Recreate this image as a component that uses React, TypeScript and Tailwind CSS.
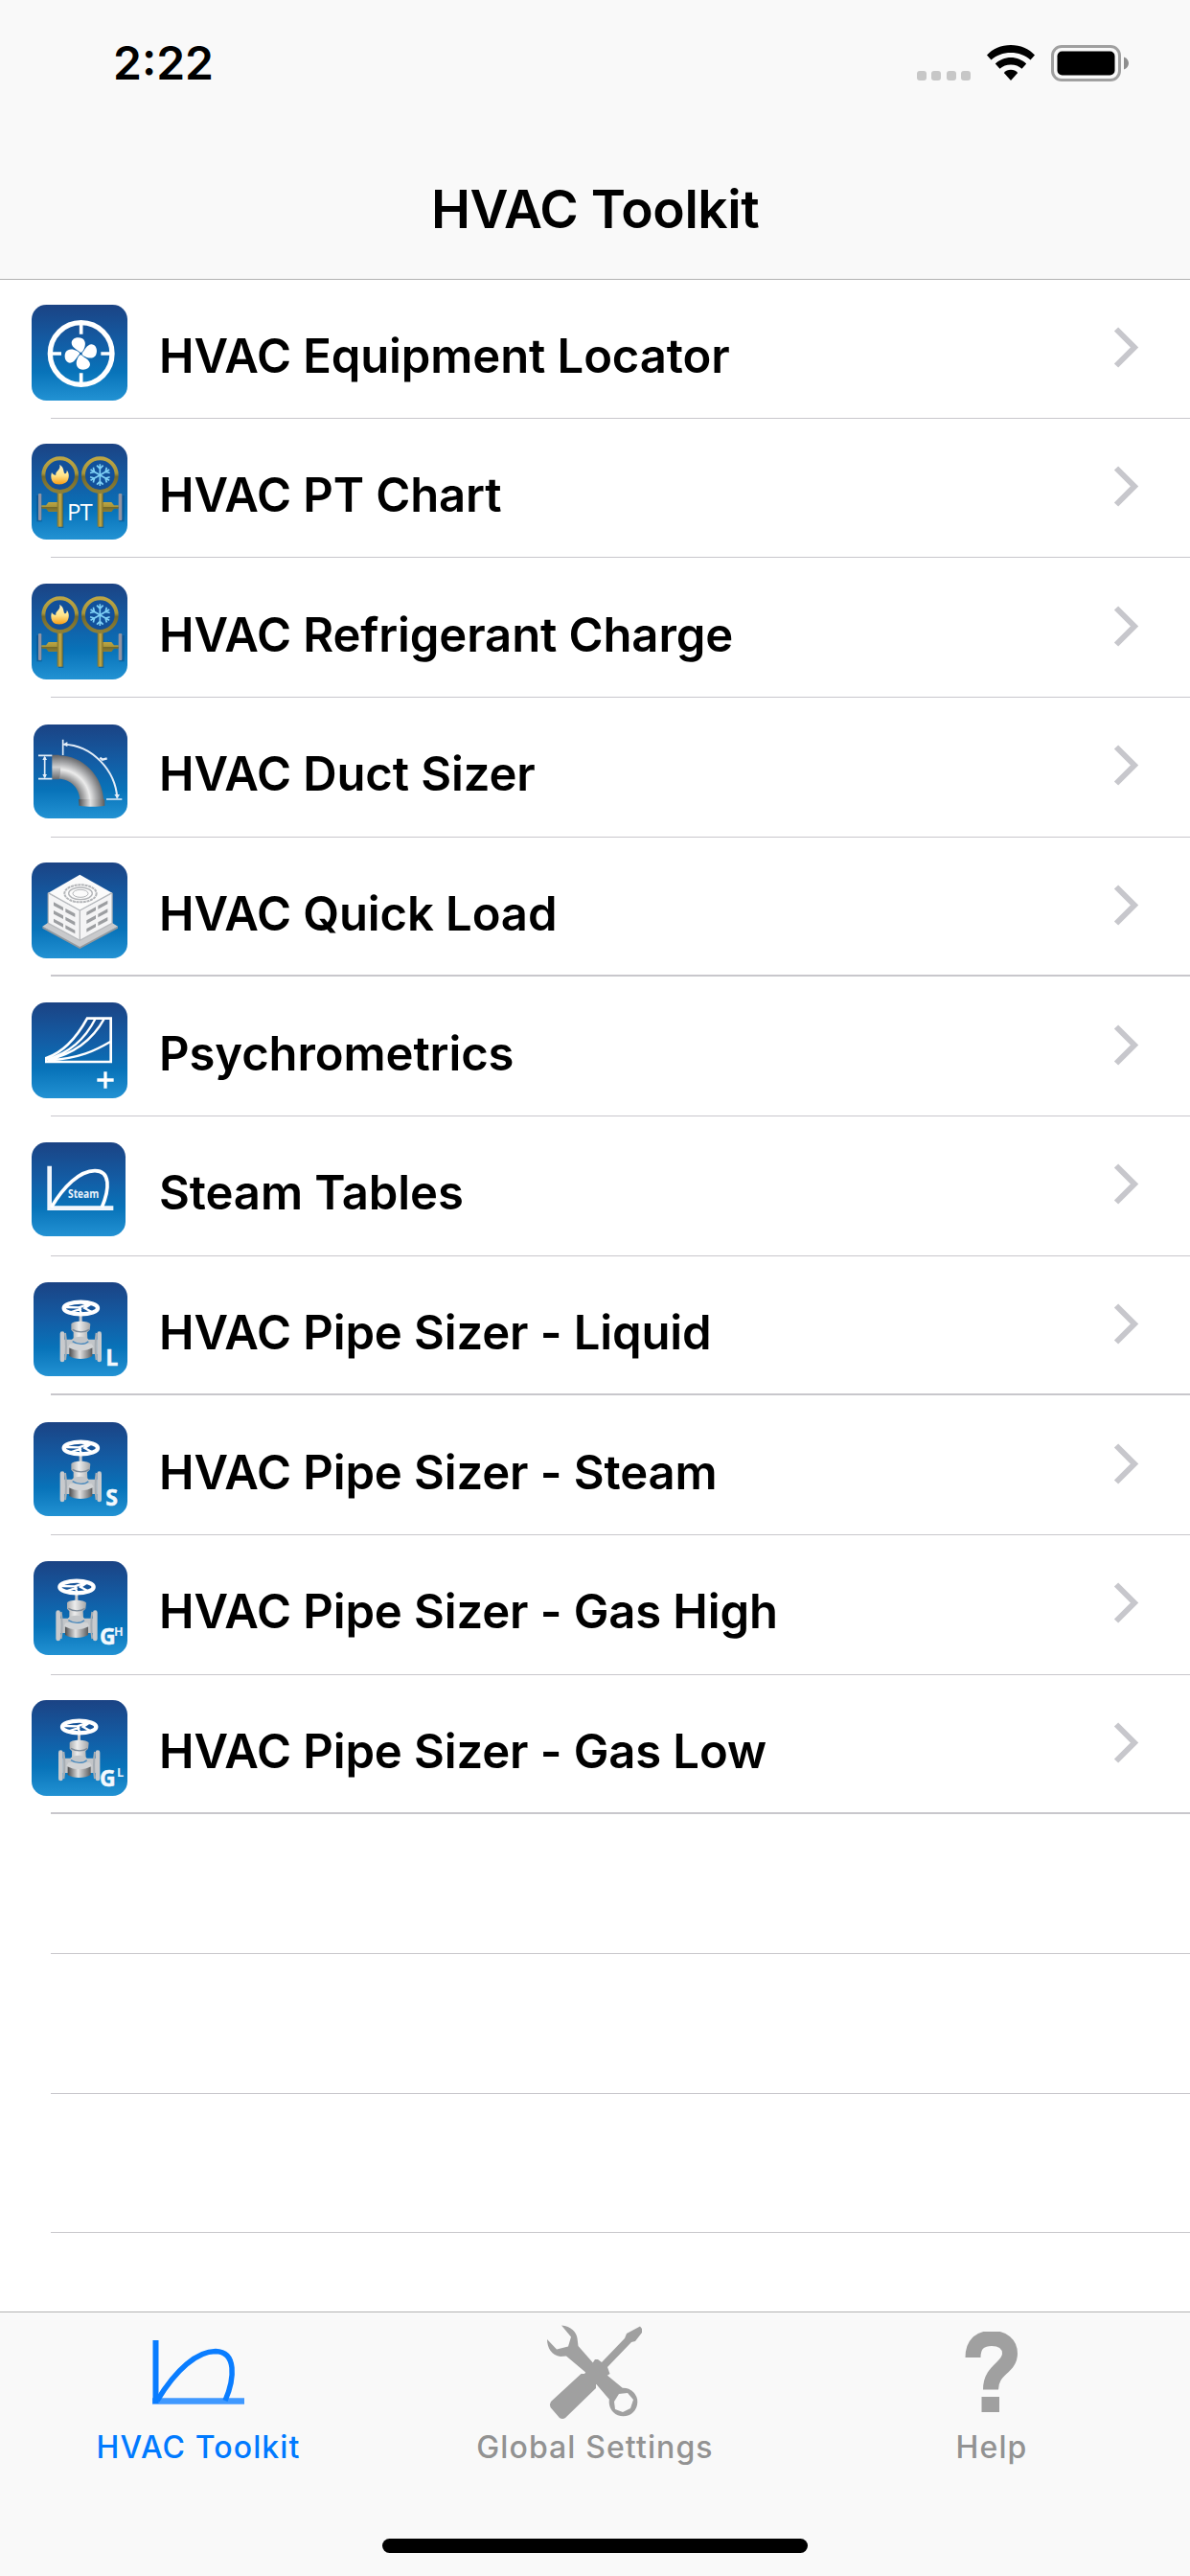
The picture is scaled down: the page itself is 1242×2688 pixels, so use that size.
import type { ReactNode } from "react";
import { clsx } from "clsx";

interface Tool {
  name: string;
  icon: ReactNode;
}

function Tile({ x = 0, y = 0, size = 300, children }: { x?: number; y?: number; size?: number; children: ReactNode }) {
  return (
    <svg viewBox="0 0 300 300" className="size-[100px] shrink-0">
      <rect x={x} y={y} width={size} height={size} rx="46" fill="url(#tile)" />
      {children}
    </svg>
  );
}

function Gradients() {
  return (
    <svg className="absolute size-0">
      <defs>
        <linearGradient id="tile" x1="0" y1="0" x2="0" y2="1">
          <stop offset="0" stopColor="#1b4384" />
          <stop offset="0.4" stopColor="#135da5" />
          <stop offset="0.7" stopColor="#0873b9" />
          <stop offset="1" stopColor="#2292d3" />
        </linearGradient>
        <linearGradient id="brass" x1="0" y1="0" x2="0" y2="1">
          <stop offset="0" stopColor="#bda645" />
          <stop offset="0.45" stopColor="#a8963a" />
          <stop offset="0.55" stopColor="#746a2b" />
          <stop offset="1" stopColor="#8d7f36" />
        </linearGradient>
        <linearGradient id="stem" x1="0" y1="0" x2="1" y2="0">
          <stop offset="0" stopColor="#7c6f2a" />
          <stop offset="0.5" stopColor="#c2ac4c" />
          <stop offset="1" stopColor="#7c6f2a" />
        </linearGradient>
        <linearGradient id="flame" x1="0" y1="0" x2="0" y2="1">
          <stop offset="0" stopColor="#fff3c4" />
          <stop offset="0.55" stopColor="#ffe48a" />
          <stop offset="1" stopColor="#f89c14" />
        </linearGradient>
        <radialGradient id="duct" gradientUnits="userSpaceOnUse" cx="84" cy="245" r="145">
          <stop offset="0.44" stopColor="#6f7072" />
          <stop offset="0.68" stopColor="#ececec" />
          <stop offset="0.8" stopColor="#b4b5b7" />
          <stop offset="1" stopColor="#5d5e61" />
        </radialGradient>
        <linearGradient id="collar" x1="0" y1="0" x2="0" y2="1">
          <stop offset="0" stopColor="#5f6062" />
          <stop offset="0.5" stopColor="#cfd0d1" />
          <stop offset="1" stopColor="#66676a" />
        </linearGradient>
        <linearGradient id="steel" x1="0" y1="0" x2="1" y2="0">
          <stop offset="0" stopColor="#a9abad" />
          <stop offset="0.4" stopColor="#ededed" />
          <stop offset="1" stopColor="#a4a6a8" />
        </linearGradient>
        <linearGradient id="drum" x1="0" y1="0" x2="1" y2="0">
          <stop offset="0" stopColor="#4c4d4f" />
          <stop offset="0.45" stopColor="#e2e2e2" />
          <stop offset="1" stopColor="#5b5c5e" />
        </linearGradient>
      </defs>
    </svg>
  );
}

function LocatorIcon() {
  return (
    <Tile>
      <circle cx="155" cy="153" r="97" fill="none" stroke="#fff" strokeWidth="16" />
      <path d="M155 56v36M155 214v36M58 153h35M217 153h35" stroke="#fff" strokeWidth="11" />
      <g transform="translate(154 153)" fill="#fff">
        {[0, 90, 180, 270].map((a) => (
          <path
            key={a}
            transform={`rotate(${a})`}
            d="M-1 -3C-8 -12 -29 -18 -29 -34C-28 -49 -8 -54 5 -47C17 -39 15 -24 9 -13C6 -7 4 -4 -1 -3Z"
          />
        ))}
      </g>
      <circle cx="154" cy="153" r="4" fill="#1265ad" />
    </Tile>
  );
}

// pair of gauges: flame on the left, snowflake on the right
function Manifold() {
  return (
    <g>
      <path d="M24 162v82M92 158v106M282 162v82M218 158v106" stroke="#0b3a6b" strokeOpacity="0.4" strokeWidth="16" />
      <rect x="21" y="156" width="10" height="84" rx="3" fill="#8f93a3" />
      <path d="M31 193h14l8-10h30v30H53l-8-10H31z" fill="url(#brass)" />
      <rect x="80" y="150" width="18" height="110" fill="url(#stem)" />
      <circle cx="89" cy="98" r="52" fill="#12509a" stroke="url(#brass)" strokeWidth="12" />
      <rect x="272" y="156" width="11" height="84" rx="3" fill="#8f93a3" />
      <path d="M272 193h-14l-8-10h-30v30h30l8-10h14z" fill="url(#brass)" />
      <rect x="206" y="150" width="18" height="110" fill="url(#stem)" />
      <circle cx="214" cy="98" r="52" fill="#12509a" stroke="url(#brass)" strokeWidth="12" />
      <path
        d="M88 65C104 76 98 88 104 94C109 93 111 88 110 83C118 91 118 105 113 115C106 130 72 133 64 116C59 106 61 96 63 90C67 97 72 99 76 98C73 84 92 84 88 65Z"
        fill="url(#flame)"
      />
      <g transform="translate(214 98)" stroke="#7fd0f5" strokeWidth="5" fill="none">
        {[0, 60, 120, 180, 240, 300].map((a) => (
          <path key={a} transform={`rotate(${a})`} d="M0 0V-34M-10 -30L0 -20L10 -30" />
        ))}
      </g>
    </g>
  );
}

function PtChartIcon() {
  return (
    <Tile>
      <Manifold />
      <text x="151" y="239" textAnchor="middle" textLength="80" fontSize="72" fill="#fff" className="font-['Open_Sans',sans-serif]">
        PT
      </text>
    </Tile>
  );
}

function RefrigerantIcon() {
  return (
    <Tile>
      <Manifold />
    </Tile>
  );
}

function DuctIcon() {
  return (
    <Tile x={6} y={6} size={294}>
      <path d="M84 103C160 103 222 165 226 245H152C150 205 122 176 84 176Z" fill="url(#duct)" />
      <path d="M64 101h22c6 22 6 54 0 77H64z" fill="url(#collar)" />
      <path d="M147 240h82v20c-20 4-56 4-80 0z" fill="url(#drum)" />
      <g fill="none" stroke="#e3edf8" strokeWidth="5">
        <path d="M21 103h43M21 176h43M41 108v64M98 53v49M234 240h49" />
        <path d="M100 68C190 70 262 150 268 236" strokeWidth="6" />
        <path d="M214 110l8 6l14-4" strokeWidth="7" />
      </g>
      <path d="M41 104l-7 13h14zM41 175l-7-13h14zM98 68l14-8v16zM268 238l-9-13h17z" fill="#e3edf8" />
    </Tile>
  );
}

function QuickLoadIcon() {
  return (
    <Tile>
      <path d="M34 200L151 262L270 200V206L151 270L34 206Z" fill="#96989b" />
      <path d="M34 200L52 188H251L270 200L151 264Z" fill="#c9cacc" />
      <path d="M52 96L151 150V244L52 190Z" fill="#f4f4f5" />
      <path d="M252 96L151 150V244L252 190Z" fill="#f4f4f5" />
      <path d="M151 38L252 95L151 150L52 95Z" fill="#fbfbfb" />
      <path d="M52 95L151 150L252 95M151 150V244M52 95V190L151 244L252 190V95" fill="none" stroke="#b7b9bc" strokeWidth="4" />
      <g fill="none" stroke="#b3b5b8">
        <ellipse cx="153" cy="97" rx="50" ry="27" strokeWidth="6" strokeDasharray="9 2" />
        <ellipse cx="153" cy="97" rx="37" ry="19" strokeWidth="4" />
        <ellipse cx="153" cy="97" rx="24" ry="12" strokeWidth="3" />
      </g>
      <g fill="#9c9ea1">
        {[0, 1, 2].map((i) => (
          <path
            key={i}
            d={`M69 ${124 + i * 26}l30 16v11l-30 -16zM106 ${144 + i * 26}l30 16v11l-30 -16zM201 ${139 + i * 26}l-29 16v11l29 -16zM238 ${119 + i * 26}l-30 16v11l30 -16z`}
          />
        ))}
      </g>
    </Tile>
  );
}

function PsychrometricsIcon() {
  return (
    <Tile>
      <g fill="none" stroke="#fff" strokeWidth="8">
        <path d="M46 186V174C100 156 140 112 174 50H248V186Z" />
        <path d="M48 178C120 158 170 110 200 50M50 180C140 160 195 110 228 50M52 181C150 176 200 150 248 122" strokeWidth="7" />
      </g>
      <path d="M231 217v52M205 243h52" stroke="#fff" strokeWidth="10" />
    </Tile>
  );
}

function SteamIcon() {
  return (
    <Tile y={3} size={294}>
      <path d="M56 77V209H256" fill="none" stroke="#f1f6fc" strokeWidth="14" />
      <path d="M62 206C100 142 150 92 198 92C248 92 244 150 220 206" fill="none" stroke="#fff" strokeWidth="11" />
      <text
        x="114"
        y="176"
        textLength="97"
        lengthAdjust="spacingAndGlyphs"
        fontSize="37"
        fill="#e6f1fb"
        className="font-['Open_Sans',sans-serif] font-bold"
      >
        Steam
      </text>
    </Tile>
  );
}

function Valve({ x = 154 }: { x?: number }) {
  return (
    <g transform={`translate(${x} 84)`}>
      <rect x="-5" y="20" width="9" height="28" fill="#c9cbce" />
      <ellipse rx="53" ry="19" fill="none" stroke="#fff" strokeWidth="13" />
      <path d="M-48 -3L-6 -2L28 -14M-6 -2L2 17M-30 12L2 2M30 -12L12 0L34 12" fill="none" stroke="#fff" strokeWidth="7" />
      <path d="M-30 50C-28 38 26 38 30 50L28 68L20 76L21 96H-23V76L-30 68Z" fill="url(#steel)" />
      <path d="M-26 67C-10 77 12 77 26 67" fill="none" stroke="#7d8b99" strokeWidth="4" />
      <path d="M-52 98H-28C-20 86 18 86 24 98H52V144H34C20 158 -24 158 -36 144H-52Z" fill="#c3c6c9" />
      <path d="M-36 124H36V150C18 162 -20 162 -36 150Z" fill="url(#drum)" />
      <path d="M-40 122C-14 136 14 136 40 122L34 112H-34Z" fill="#d2d4d6" />
      <path d="M-26 104C-10 115 12 115 24 104" fill="none" stroke="#4989bd" strokeWidth="4" />
      <rect x="-65" y="73" width="14" height="96" rx="7" fill="#c8cacd" />
      <rect x="51" y="73" width="14" height="96" rx="7" fill="#c8cacd" />
      <path d="M-49 78C-45 100 -45 140 -49 162M49 78C45 100 45 140 49 162" fill="none" stroke="#a6adb4" strokeWidth="6" />
    </g>
  );
}

function PipeIcon({ letter, sup, full }: { letter: string; sup?: string; full?: boolean }) {
  return (
    <Tile x={full ? 0 : 6} y={full ? 0 : 3} size={full ? 300 : 294}>
      <Valve x={sup === "H" ? 141 : full ? 149 : 154} />
      <text
        x={sup ? 213 : 232}
        y={sup && full ? 270 : 265}
        fontSize="69"
        fill="#f2f8fd"
        stroke="#f2f8fd"
        strokeWidth="1.5"
        className="font-['Open_Sans',sans-serif] font-bold"
      >
        {letter}
      </text>
      {sup && (
        <text x={full ? 267 : 258} y={full ? 241 : 236} fontSize="38" fill="#e4f0fa" className="font-['Open_Sans',sans-serif] font-bold">
          {sup}
        </text>
      )}
    </Tile>
  );
}

const TOOLS: Tool[] = [
  { name: "HVAC Equipment Locator", icon: <LocatorIcon /> },
  { name: "HVAC PT Chart", icon: <PtChartIcon /> },
  { name: "HVAC Refrigerant Charge", icon: <RefrigerantIcon /> },
  { name: "HVAC Duct Sizer", icon: <DuctIcon /> },
  { name: "HVAC Quick Load", icon: <QuickLoadIcon /> },
  { name: "Psychrometrics", icon: <PsychrometricsIcon /> },
  { name: "Steam Tables", icon: <SteamIcon /> },
  { name: "HVAC Pipe Sizer - Liquid", icon: <PipeIcon letter="L" /> },
  { name: "HVAC Pipe Sizer - Steam", icon: <PipeIcon letter="S" /> },
  { name: "HVAC Pipe Sizer - Gas High", icon: <PipeIcon letter="G" sup="H" /> },
  { name: "HVAC Pipe Sizer - Gas Low", icon: <PipeIcon letter="G" sup="L" full /> },
];

const THICK_ROWS = [4, 7, 10];

function StatusBar() {
  return (
    <div className="flex h-[132px] items-start justify-between pl-[118px] pr-[63px]">
      <span className="mt-[37px] text-[48px] leading-[58px] font-semibold">2:22</span>
      <div className="mt-[47px] flex h-[38px] items-start">
        <div className="mt-[27px] flex gap-[5.4px]">
          {[0, 1, 2, 3].map((i) => (
            <span key={i} className="h-[10px] w-[10px] rounded-[3px] bg-[#c7c7c7]" />
          ))}
        </div>
        <svg viewBox="0 0 50 37" className="ml-[17px] h-[37px] w-[50px]">
          <path d="M25 0C35 0 44 4 50 10.500L45.500 15.500C40 10.500 33 8 25 8C17 8 10 10.500 4.500 15.500L0 10.500C6 4 15 0 25 0Z" />
          <path d="M25 13C31 13 37 15.500 41.200 19.500L36.500 24.700C33.500 22 29.500 20.500 25 20.500C20.500 20.500 16.500 22 13.500 24.700L8.800 19.500C13 15.500 19 13 25 13Z" />
          <path d="M25 25.800C27.800 25.800 30.400 27 32.200 28.900L25 37L17.800 28.900C19.600 27 22.200 25.800 25 25.800Z" />
        </svg>
        <svg viewBox="0 0 82 38" className="ml-[17px] h-[38px] w-[82px]">
          <rect x="1.500" y="1.500" width="70" height="35" rx="9.500" fill="none" stroke="#a0a0a0" strokeWidth="3" />
          <rect x="6.500" y="6.500" width="60" height="25" rx="5" />
          <path d="M76 12.500C79 13.700 81 16 81 19C81 22 79 24.300 76 25.500Z" fill="#8e8e8e" />
        </svg>
      </div>
    </div>
  );
}

function ToolkitGlyph() {
  return (
    <svg viewBox="0 0 97 67" className="h-[67px] w-[97px]" fill="none" stroke="#0a7dff">
      <path d="M0 63.500H96" strokeWidth="6.500" stroke="#4099ff" />
      <path d="M3.500 0V66" strokeWidth="6" />
      <path d="M5 63C25 30 47 11.500 66 11.500C88 12 86 40 76 63" strokeWidth="5.500" />
    </svg>
  );
}

function SettingsGlyph() {
  return (
    <svg viewBox="0 0 100 99" className="h-[99px] w-[100px]" fill="#a0a0a0">
      <path d="M15 0.500C25 1 31 8 31.500 14L32.500 22L50 42L79 66L66 79L42 51L20 32.500L14 33C5 32 0 24 0 15L10 25.500L22 22.500L25 12.500Z" />
      <path d="M97 1.500L99 4V8L92 17L88 18L63 44L65.500 51L61 54L51 62V66L19 97Q16 99 13 97L3.500 86Q2 83 4 80L35.500 51L39 51L46 42L50 36H53L57 39L81 14L83 9Z" />
      <circle cx="79.500" cy="80.500" r="14.800" />
      <path d="M75 72L84 71L90 78L87 87L79 91L71 88L70 80Z" fill="#f9f9f9" />
    </svg>
  );
}

function HelpGlyph() {
  return (
    <svg viewBox="0 0 56 84" className="h-[84px] w-[56px]" fill="none" stroke="#a0a0a0" strokeWidth="16">
      <path d="M8.500 27C8.500 13 16 7 28 7C40 7 47 13 47 23C47 38 27 39 27 60.500" />
      <path d="M17.500 76H36" />
    </svg>
  );
}

const TABS = [
  { label: "HVAC Toolkit", icon: <ToolkitGlyph />, active: true },
  { label: "Global Settings", icon: <SettingsGlyph />, active: false },
  { label: "Help", icon: <HelpGlyph />, active: false },
];

export default function App() {
  return (
    <div className="flex h-[2688px] w-[1242px] flex-col overflow-hidden bg-white font-['Inter',sans-serif] text-black">
      <Gradients />
      <header className="h-[292px] shrink-0 border-b border-[#b2b2b2] bg-[#f9f9f9]">
        <StatusBar />
        <h1 className="mt-[53px] text-center text-[55px] leading-[66px] font-semibold tracking-[-0.45px]">HVAC Toolkit</h1>
      </header>

      <main className="-mt-px min-h-0 flex-1 overflow-hidden">
        {Array.from({ length: 14 }, (_, i) => {
          const tool = TOOLS[i];
          return (
            <div key={i} className="flex h-[145.66px] flex-col">
              <div className="flex min-h-0 flex-1 items-start pl-[33px]">
                {tool && (
                  <>
                    <div className="mt-[26.5px]">{tool.icon}</div>
                    <span className="mt-[50.5px] ml-[33px] flex-1 text-[49px] leading-[60px] font-semibold tracking-[-0.1px]">
                      {tool.name}
                    </span>
                    <svg
                      viewBox="0 0 27 43"
                      className="mt-[49.500px] mr-[53px] h-[43px] w-[27px]"
                      fill="none"
                      stroke="#c7c7cc"
                      strokeWidth="6"
                    >
                      <path d="M3 2.500L22 21.500L3 40.500" />
                    </svg>
                  </>
                )}
              </div>
              <div className={clsx("ml-[53px] bg-[#c8c7cc]", THICK_ROWS.includes(i) ? "h-[2px]" : "h-px")} />
            </div>
          );
        })}
      </main>

      <footer className="flex h-[276px] shrink-0 flex-col items-center border-t border-[#b2b2b2] bg-[#f9f9f9]">
        <nav className="grid w-full grid-cols-3">
          {TABS.map((t) => (
            <div key={t.label} className="flex flex-col items-center">
              <div className="flex h-[124px] items-center">{t.icon}</div>
              <span
                className={clsx(
                  "-mt-[3px] text-[32px] leading-[40px] font-medium tracking-[1.1px]",
                  t.active ? "text-[#007aff]" : "text-[#929292]"
                )}
              >
                {t.label}
              </span>
            </div>
          ))}
        </nav>
        <div className="mt-[75px] h-[15px] w-[444px] rounded-full bg-black" />
      </footer>
    </div>
  );
}
